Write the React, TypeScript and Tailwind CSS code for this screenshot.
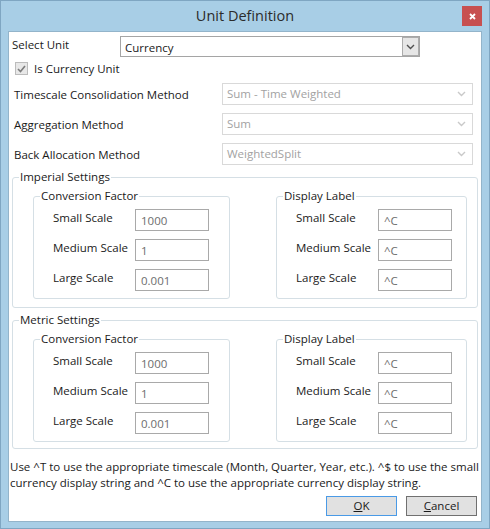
import React from "react";

const Chevron = ({ className }: { className: string }) => (
  <svg width="9" height="6" viewBox="0 0 9 6" className={className}>
    <path d="M1 1 L4.5 4.5 L8 1" fill="none" stroke="currentColor" strokeWidth="1.4" />
  </svg>
);

const DisabledSelect = ({ value }: { value: string }) => (
  <div className="w-[251px] h-[22px] border border-[#d9d9d9] bg-white flex items-center justify-between pl-[4px] pr-[6px]">
    <span className="text-[#a2a2a2]">{value}</span>
    <Chevron className="text-[#c9c9c9]" />
  </div>
);

const ScaleRow = ({ label, value }: { label: string; value: string }) => (
  <div className="flex items-start h-[22px]">
    <span className="ml-[19px] w-[82px] pt-[1px] leading-[16px]">{label}</span>
    <div className="w-[74px] h-[22px] border border-[#a9a9a9] flex items-center pl-[5px] pt-[2px] text-[#6d6d6d]">
      {value}
    </div>
  </div>
);

const ScaleGroup = ({
  title,
  values,
  width,
  className,
}: {
  title: string;
  values: string[];
  width: string;
  className: string;
}) => (
  <fieldset className={`${width} ${className} border border-[#d5dfe5] rounded-[3px] pt-[5px] pb-[7px] flex flex-col gap-[8px]`}>
    <legend className="ml-[6px] px-[1px] leading-[16px]">{title}</legend>
    <ScaleRow label="Small Scale" value={values[0]} />
    <ScaleRow label="Medium Scale" value={values[1]} />
    <ScaleRow label="Large Scale" value={values[2]} />
  </fieldset>
);

const SettingsGroup = ({ title, bottom, top }: { title: string; bottom: string; top: string }) => (
  <fieldset className={`ml-[3px] w-[466px] ${top} ${bottom} border border-[#d5dfe5] rounded-[3px] flex`}>
    <legend className="ml-[6px] px-[1px] leading-[16px]">{title}</legend>
    <ScaleGroup title="Conversion Factor" values={["1000", "1", "0.001"]} width="w-[197px]" className="ml-[20px] mt-[3px]" />
    <ScaleGroup title="Display Label" values={["^C", "^C", "^C"]} width="w-[191px]" className="ml-[46px] mt-[3px]" />
  </fieldset>
);

export default function App() {
  return (
    <div className="w-[490px] h-[529px] bg-[#a8cee6] border border-[#7fa6c2] flex flex-col font-['Open_Sans',sans-serif] text-[11.5px] text-[#1a1a1a]">
      <div className="relative h-[30px] flex items-center justify-center">
        <span className="text-[14.5px] text-[#2b2b2b] leading-none">Unit Definition</span>
        <div className="absolute right-[7px] top-[5px] w-[20px] h-[20px] bg-[#c75050] flex items-center justify-center">
          <svg width="7" height="7" viewBox="0 0 7 7">
            <path d="M1 1 L6 6 M6 1 L1 6" stroke="white" strokeWidth="1.8" />
          </svg>
        </div>
      </div>

      <div className="mx-[7px] h-[491px] bg-white border border-[#93b4ca] flex flex-col">
        <div className="flex items-start mt-[4px] h-[21px]">
          <span className="pl-[3px] w-[111px] leading-[16px] pt-[1px]">Select Unit</span>
          <div className="w-[300px] h-[21px] border border-[#a5a5a5] flex items-center justify-between pl-[4px]">
            <span className="pt-[2px]">Currency</span>
            <div className="w-[17px] h-[19px] bg-[#e6e6e6] border border-[#acacac] flex items-center justify-center">
              <Chevron className="text-[#505050]" />
            </div>
          </div>
        </div>

        <div className="flex items-center mt-[5px] h-[13px]">
          <div className="ml-[6px] w-[13px] h-[13px] border border-[#bcbcbc] bg-[#e8e8e8] flex items-center justify-center">
            <svg width="9" height="8" viewBox="0 0 9 8">
              <path d="M1 4 L3.5 6.5 L8 1" fill="none" stroke="#7c7c7c" strokeWidth="1.6" />
            </svg>
          </div>
          <span className="ml-[6px]">Is Currency Unit</span>
        </div>

        {[
          ["Timescale Consolidation Method", "Sum - Time Weighted"],
          ["Aggregation Method", "Sum"],
          ["Back Allocation Method", "WeightedSplit"],
        ].map(([label, value]) => (
          <div key={label} className="flex items-center mt-[8px] h-[22px]">
            <span className="pl-[5px] w-[213px] pt-[2px]">{label}</span>
            <DisabledSelect value={value} />
          </div>
        ))}

        <SettingsGroup title="Imperial Settings" top="mt-[4px]" bottom="pb-[8px]" />
        <SettingsGroup title="Metric Settings" top="mt-[4px]" bottom="pb-[6px]" />

        <p className="mt-[10px] pl-[1px] leading-[16px] whitespace-nowrap">
          Use ^T to use the appropriate timescale (Month, Quarter, Year, etc.). ^$ to use the small
          <br />
          currency display string and ^C to use the appropriate currency display string.
        </p>

        <div className="flex justify-end gap-[9px] mt-[5px] mr-[4px]">
          <button className="w-[71px] h-[20px] bg-[#e1e1e1] border border-[#4a9ae6] leading-none">
            <span className="underline">O</span>K
          </button>
          <button className="w-[71px] h-[20px] bg-[#e1e1e1] border border-[#707070] leading-none">
            <span className="underline">C</span>ancel
          </button>
        </div>
      </div>
    </div>
  );
}
